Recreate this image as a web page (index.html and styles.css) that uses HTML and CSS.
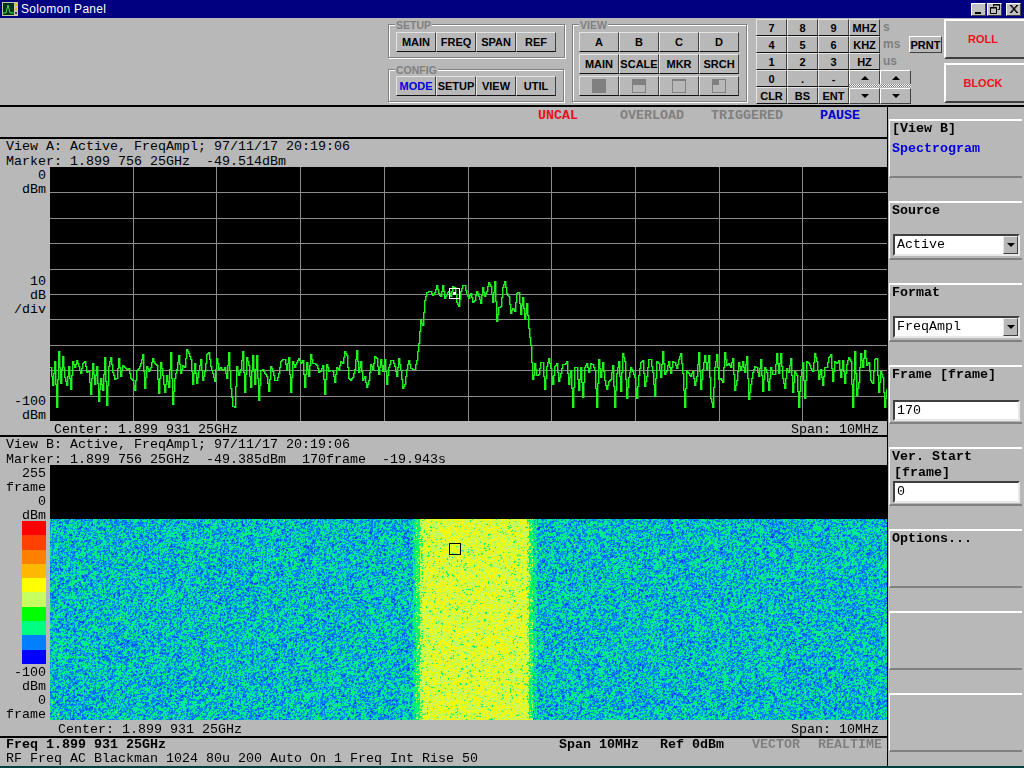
FILE: index.html
```html
<!DOCTYPE html>
<html lang="en">
<head>
<meta charset="utf-8">
<title>Solomon Panel</title>
<link rel="stylesheet" href="styles.css">
</head>
<body>
<div class="window">
  <header class="titlebar">
    <svg class="app-icon" width="16" height="14" viewBox="0 0 16 14"><rect width="16" height="14" fill="#c8c8a0"/><rect x="1" y="1" width="11" height="12" fill="#003020"/><path d="M1 11H4L6 3L8 11H12" fill="none" stroke="#40e040"/><rect x="13" y="2" width="2" height="2" fill="#e0c000"/><rect x="13" y="6" width="2" height="2" fill="#e0c000"/><rect x="13" y="10" width="2" height="2" fill="#404040"/></svg>
    <span class="title-text">Solomon Panel</span>
    <div class="win-buttons">
      <span class="win-btn"><svg width="14" height="12" viewBox="0 0 14 12"><rect x="3" y="9" width="6" height="2" fill="#000"/></svg></span>
      <span class="win-btn gap-after"><svg width="14" height="12" viewBox="0 0 14 12"><path d="M5.5 3.5V1.5H11.5V6.5H9.5M2.5 4.5H8.5V10.5H2.5Z" fill="none" stroke="#000"/><path d="M5 2H12M2 5H9" stroke="#000"/></svg></span>
      <span class="win-btn"><svg width="14" height="12" viewBox="0 0 14 12"><path d="M3 2L10 10M4 2L11 10M10 2L3 10M11 2L4 10" stroke="#000"/></svg></span>
    </div>
  </header>

  <section class="toolbar">
    <div class="group-col">
      <div class="group group-setup">
        <span class="legend">SETUP</span>
        <div class="btn-row"><button class="btn">MAIN</button><button class="btn">FREQ</button><button class="btn">SPAN</button><button class="btn">REF</button></div>
      </div>
      <div class="group group-config">
        <span class="legend">CONFIG</span>
        <div class="btn-row"><button class="btn blue">MODE</button><button class="btn">SETUP</button><button class="btn">VIEW</button><button class="btn">UTIL</button></div>
      </div>
    </div>
    <div class="group group-view">
      <span class="legend">VIEW</span>
      <div class="btn-row"><button class="btn">A</button><button class="btn">B</button><button class="btn">C</button><button class="btn">D</button></div>
      <div class="btn-row"><button class="btn">MAIN</button><button class="btn">SCALE</button><button class="btn">MKR</button><button class="btn">SRCH</button></div>
      <div class="btn-row">
        <button class="btn"><svg width="14" height="14" viewBox="0 0 14 14"><rect width="14" height="14" fill="#808080"/></svg></button>
        <button class="btn"><svg width="14" height="14" viewBox="0 0 14 14"><rect x=".5" y=".5" width="13" height="13" fill="none" stroke="#808080"/><rect width="14" height="6" fill="#808080"/></svg></button>
        <button class="btn"><svg width="14" height="14" viewBox="0 0 14 14"><rect x=".5" y=".5" width="13" height="13" fill="none" stroke="#808080"/><rect width="14" height="2" fill="#808080"/></svg></button>
        <button class="btn"><svg width="14" height="14" viewBox="0 0 14 14"><rect x=".5" y=".5" width="13" height="13" fill="none" stroke="#808080"/><rect width="7" height="6" fill="#808080"/></svg></button>
      </div>
    </div>
    <div class="keypad">
      <button class="key">7</button><button class="key">8</button><button class="key">9</button><button class="key">MHZ</button><span class="unit">s</span><span class="key-spacer"></span>
      <button class="key">4</button><button class="key">5</button><button class="key">6</button><button class="key">KHZ</button><span class="unit">ms</span><button class="key prnt">PRNT</button>
      <button class="key">1</button><button class="key">2</button><button class="key">3</button><button class="key">HZ</button><span class="unit">us</span><span class="key-spacer"></span>
      <button class="key">0</button><button class="key">.</button><button class="key">-</button><button class="key arrow"><i class="tri-up"></i></button><button class="key arrow span2"><i class="tri-up"></i></button><span class="key-end"></span>
      <button class="key">CLR</button><button class="key">BS</button><button class="key">ENT</button><button class="key arrow down"><i class="tri-down"></i></button><button class="key arrow down span2"><i class="tri-down"></i></button><span class="key-end"></span>
      <span class="dither"></span>
    </div>
    <div class="mode-col">
      <button class="mode-btn">ROLL</button>
      <button class="mode-btn">BLOCK</button>
    </div>
  </section>

  <main class="main">
    <div class="left">
      <div class="status-top">
        <span class="st st-uncal">UNCAL</span>
        <span class="st st-over">OVERLOAD</span>
        <span class="st st-trig">TRIGGERED</span>
        <span class="st st-pause">PAUSE</span>
      </div>

      <section class="view view-a">
        <div class="view-head">View A: Active, FreqAmpl; 97/11/17 20:19:06
Marker: 1.899 756 25GHz  -49.514dBm</div>
        <div class="plot-row plot-a">
          <div class="axis">
            <div>0<br>dBm</div>
            <div>10<br>dB<br>/div</div>
            <div>-100<br>dBm</div>
          </div>
          <canvas id="trace" width="837" height="254"></canvas>
        </div>
        <div class="view-foot foot-a"><span>Center: 1.899 931 25GHz</span><span>Span: 10MHz</span></div>
      </section>

      <section class="view view-b">
        <div class="view-head">View B: Active, FreqAmpl; 97/11/17 20:19:06
Marker: 1.899 756 25GHz  -49.385dBm  170frame  -19.943s</div>
        <div class="plot-row plot-b">
          <div class="axis">
            <div>255<br>frame<br>0<br>dBm</div>
            <div class="colorbar">
              <i class="c1"></i><i class="c2"></i><i class="c3"></i><i class="c4"></i><i class="c5"></i><i class="c6"></i><i class="c7"></i><i class="c8"></i><i class="c9"></i><i class="c10"></i>
            </div>
            <div>-100<br>dBm<br>0<br>frame</div>
          </div>
          <div class="spectro">
            <div class="spectro-blank"></div>
            <canvas id="spectro" width="837" height="201"></canvas>
            <span class="spectro-marker"></span>
          </div>
        </div>
        <div class="view-foot foot-b"><span>Center: 1.899 931 25GHz</span><span>Span: 10MHz</span></div>
      </section>

      <footer class="status-bottom">
        <div class="sb-line">
          <b class="sb-freq">Freq 1.899 931 25GHz</b>
          <b class="sb-span">Span 10MHz</b>
          <b class="sb-ref">Ref 0dBm</b>
          <b class="sb-vec">VECTOR</b>
          <b class="sb-rt">REALTIME</b>
        </div>
        <div class="sb-line">RF Freq AC Blackman 1024 80u 200 Auto On 1 Freq Int Rise 50</div>
      </footer>
    </div>

    <aside class="panel">
      <div class="sec"><div class="sec-label">[View B]</div><div class="sec-value">Spectrogram</div></div>
      <div class="sec"><div class="sec-label">Source</div><div class="combo"><span>Active</span><i class="combo-btn"><i class="tri-down"></i></i></div></div>
      <div class="sec"><div class="sec-label">Format</div><div class="combo"><span>FreqAmpl</span><i class="combo-btn"><i class="tri-down"></i></i></div></div>
      <div class="sec"><div class="sec-label">Frame [frame]</div><div class="field field-frame">170</div></div>
      <div class="sec"><div class="sec-label">Ver. Start</div><div class="sec-label sub">[frame]</div><div class="field field-start">0</div></div>
      <div class="sec"><div class="sec-label">Options...</div></div>
      <div class="sec"></div>
      <div class="sec"></div>
    </aside>
  </main>
  <div class="bottom-edge"></div>
</div>
<script src="app.js"></script>
</body>
</html>
```
FILE: styles.css
```css
* { box-sizing: border-box; }
html, body { margin: 0; padding: 0; }
body { background: #b8b8b8; overflow: hidden; }
button { margin: 0; padding: 0; font: inherit; color: inherit; }

.window { width: 1024px; height: 768px; display: flex; flex-direction: column; background: #b8b8b8; color: #000; font-family: "Liberation Mono", monospace; font-size: 13.33px; }

.titlebar { flex: none; height: 18px; background: #000080; display: flex; align-items: center; padding: 0 3px 0 2px; }
.app-icon { flex: none; display: block; }
.title-text { margin-left: 3px; color: #fff; font: 12px "Liberation Sans", sans-serif; letter-spacing: .3px; }
.win-buttons { margin-left: auto; display: flex; }
.win-btn { width: 15px; height: 13px; background: #c0c0c0; margin-left: 1px; border: 1px solid; border-color: #fff #404040 #404040 #fff; display: flex; align-items: center; justify-content: center; overflow: hidden; }
.win-btn svg { flex: none; }
.gap-after { margin-right: 3px; }

.toolbar { flex: none; height: 89px; padding-left: 388px; display: flex; border-bottom: 2px solid #000; }

.group-col { width: 177px; padding-top: 6px; display: flex; flex-direction: column; gap: 11px; }
.group { position: relative; border: 1px solid #808080; box-shadow: 1px 1px 0 #fff, inset 1px 1px 0 #fff; }
.group-setup { height: 34px; padding: 7px 0 0 7px; }
.group-config { height: 33px; padding: 6px 0 0 7px; width: 176px; }
.group-view { width: 175px; height: 78px; margin: 6px 0 0 7px; padding: 7px 0 0 6px; display: flex; flex-direction: column; gap: 2px; }
.legend { position: absolute; left: 6px; top: -6px; padding: 0 1px; background: #b8b8b8; color: #808080; font: bold 10.5px/12px "Liberation Sans", sans-serif; }

.btn-row { display: flex; height: 20px; }
.btn { flex: none; width: 40px; height: 20px; background: #b8b8b8; border: 1px solid; border-color: #e4e4e4 #404040 #101010 #e4e4e4; font: bold 11px "Liberation Sans", sans-serif; display: flex; align-items: center; justify-content: center; white-space: nowrap; overflow: visible; }
.btn svg { display: block; }
.blue { color: #0000e0; }

.keypad { position: relative; flex: none; width: 186px; margin: 1px 0 0 9px; display: grid; grid-template-columns: 31px 31px 31px 31px 29px 2px 31px; grid-auto-rows: 17px; align-content: start; }
.key { background: #b8b8b8; border: 1px solid; border-color: #e4e4e4 #404040 #101010 #e4e4e4; font: bold 11px "Liberation Sans", sans-serif; display: flex; align-items: center; justify-content: center; }
.unit { grid-column: 5; color: #808080; font: bold 12px/17px "Liberation Sans", sans-serif; padding-left: 3px; white-space: nowrap; }
.prnt { grid-column: 6 / 8; border-color: #fff #404040 #404040 #fff; }
.key-spacer { grid-column: 6 / 8; }
.key-end { grid-column: 7; }
.span2 { grid-column: 5 / 7; }
.arrow { height: 16px; border-color: #fff #404040 #404040 #fff; }
.arrow.down { margin-top: 1px; }
.dither { position: absolute; left: 93px; top: 65px; width: 62px; height: 3px; background: repeating-conic-gradient(#fff 0 25%, #808080 0 50%) 0 0 / 2px 2px; }
.tri-up, .tri-down { display: block; width: 0; height: 0; border-left: 4px solid transparent; border-right: 4px solid transparent; }
.tri-up { border-bottom: 4px solid #000; }
.tri-down { border-top: 4px solid #000; }

.mode-col { flex: none; width: 80px; margin-left: 2px; padding-top: 1px; display: flex; flex-direction: column; gap: 4px; }
.mode-btn { height: 40px; width: 80px; padding-right: 4px; background: #b8b8b8; border: 0; border-top: 2px solid #fff; border-left: 2px solid #fff; border-bottom: 2px solid #404040; color: #f01020; font: bold 11px "Liberation Sans", sans-serif; }

.main { flex: 1; min-height: 0; display: flex; }
.left { width: 888px; flex: none; border-right: 1px solid #000; display: flex; flex-direction: column; }
.panel { flex: 1; padding: 12px 2px 0 1px; display: flex; flex-direction: column; gap: 23px; }

.status-top { flex: none; height: 30px; padding-left: 538px; display: flex; font-weight: bold; line-height: 18px; }
.st { flex: none; }
.st-uncal { width: 82px; color: #e81020; }
.st-over { width: 91px; color: #808080; }
.st-trig { width: 109px; color: #808080; }
.st-pause { color: #0000d0; }

.view { flex: none; border-top: 2px solid #000; }
.view-a { height: 298px; }
.view-b { height: 301px; }
.view-head { height: 28px; padding-left: 6px; white-space: pre; line-height: 15px; }
.plot-row { display: flex; }
.plot-a { height: 254px; }
.plot-b { height: 255px; }
.axis { flex: none; width: 50px; height: calc(100% + 2px); padding: 2px 4px 0 0; display: flex; flex-direction: column; justify-content: space-between; text-align: right; line-height: 14px; }
canvas { display: block; }
.colorbar { width: 24px; height: 143px; margin: -2px 0 2px 22px; display: flex; flex-direction: column; }
.colorbar i { display: block; flex: 1; }
.c1 { background: #ff0000; } .c2 { background: #ff4000; } .c3 { background: #ff8000; } .c4 { background: #ffb800; } .c5 { background: #ffff00; }
.c6 { background: #c8ff60; } .c7 { background: #00ff00; } .c8 { background: #00ff80; } .c9 { background: #0080ff; } .c10 { background: #0000ff; }
.spectro { position: relative; flex: none; width: 837px; }
.spectro-blank { height: 54px; background: #000; }
.spectro-marker { position: absolute; left: 399px; top: 78px; width: 12px; height: 12px; border: 1px solid #000; }
.view-foot { display: flex; justify-content: space-between; padding-right: 8px; line-height: 15px; }
.foot-a { padding-left: 54px; padding-top: 1px; }
.foot-b { padding-left: 58px; padding-top: 2px; }

.status-bottom { flex: none; border-top: 2px solid #000; padding: 0 0 0 6px; line-height: 14px; }
.sb-line { display: flex; white-space: pre; height: 14px; }
.sb-freq { width: 553px; }
.sb-span { width: 101px; }
.sb-ref { width: 92px; }
.sb-vec { width: 66px; color: #808080; }
.sb-rt { color: #808080; }

.sec { flex: none; height: 59px; border-top: 2px solid #fff; border-left: 1px solid #fff; border-bottom: 2px solid #808080; padding: 0 0 0 2px; font-weight: bold; line-height: 16px; }
.sec-value { margin-top: 4px; color: #0000e0; }
.sub { padding-left: 2px; }
.combo { margin: 15px 0 0 1px; height: 22px; width: 127px; background: #fff; border: 2px solid; border-color: #404040 #e8e8e8 #e8e8e8 #404040; display: flex; font-weight: normal; line-height: 18px; padding-left: 2px; }
.combo span { flex: 1; }
.combo-btn { flex: none; width: 15px; height: 18px; background: #b8b8b8; border: 1px solid; border-color: #e8e8e8 #404040 #404040 #e8e8e8; display: flex; align-items: center; justify-content: center; }
.field { margin-left: 1px; width: 127px; background: #fff; border: 2px solid; border-color: #404040 #e8e8e8 #e8e8e8 #404040; font-weight: normal; padding-left: 2px; height: 21px; line-height: 17px; }
.field-frame { margin-top: 17px; }
.field-start { height: 22px; line-height: 18px; }

.bottom-edge { flex: none; height: 2px; background: #004040; }
```
FILE: app.js
```js
(function () {
  var state = 0x5eed1234;
  function rnd() { // mulberry32
    state = (state + 0x6D2B79F5) | 0;
    var r = Math.imul(state ^ (state >>> 15), 1 | state);
    r = (r + Math.imul(r ^ (r >>> 7), 61 | r)) ^ r;
    return ((r ^ (r >>> 14)) >>> 0) / 4294967296;
  }
  function gauss() { return (rnd() + rnd() + rnd() + rnd() - 2) * 1.73; }

  // Trace plot
  var tc = document.getElementById('trace');
  var t = tc.getContext('2d');
  t.fillStyle = '#000';
  t.fillRect(0, 0, 837, 254);
  t.fillStyle = '#8c8c8c';
  var i;
  for (i = 1; i < 10; i++) t.fillRect(Math.round(i * 83.7) - 1, 0, 1, 254);
  for (i = 1; i < 10; i++) t.fillRect(0, Math.round(i * 25.4), 837, 1);

  function env(x) { // page x to page y of the level
    if (x < 414) return 366;
    if (x < 420) return 366 - (x - 414) * 7;
    if (x < 428) return 324 - (x - 420) * 4;
    if (x < 522) return 291;
    if (x < 533) return 291 + (x - 522) * 6.8;
    return 366;
  }
  function sample() { // log-Rayleigh fluctuation in px, long tail downwards
    var e = Math.max(-Math.log(Math.max(rnd(), 0.001)), 0.025);
    return -10 * Math.log(e) / Math.LN10 * 2.54;
  }
  // A sample every 2 px, joined by straight segments
  var STEP = 2, pts = [];
  for (var n = 0; n <= 837 / STEP + 1; n++) pts.push(sample());
  function level(x) {
    var k = Math.floor(x / STEP), f = x / STEP - k;
    var p = pts[k] * (1 - f) + pts[k + 1] * f;
    var inBand = x + 50 > 420 && x + 50 < 526;
    return env(x + 50) + p * (inBand ? 0.8 : 1) - 167;
  }
  var prev = Math.round(level(0));
  for (var x = 0; x < 837; x++) {
    var y = Math.min(253, Math.max(0, Math.round(level(x))));
    var a = Math.min(prev, y), b = Math.max(prev, y);
    t.fillStyle = 'rgba(34,220,34,.5)';
    t.fillRect(x + 1, a, 1, b - a + 1);
    t.fillStyle = '#22f022';
    t.fillRect(x, a, 1, b - a + 1);
    prev = y;
  }
  // Marker on the trace
  t.strokeStyle = '#fff';
  t.lineWidth = 1;
  t.strokeRect(399.5, 121.5, 10, 10);
  t.fillStyle = '#fff';
  t.fillRect(403, 125, 3, 3);

  // Spectrogram
  var sc = document.getElementById('spectro');
  var g = sc.getContext('2d');
  var W = 837, H = 201;
  var img = g.createImageData(W, H);
  var pal = [[0, 60, 240], [0, 130, 245], [0, 235, 150], [0, 245, 90], [195, 250, 90], [250, 250, 0]];
  var field = new Float32Array(W * H);
  for (i = 0; i < W * H; i++) field[i] = gauss();
  function mean(px) {
    if (px < 413) return 1.52;
    if (px < 416) return 2.3;
    if (px < 420) return 3.0;
    if (px < 423) return 3.9;
    if (px < 527) return 4.4;
    if (px < 529) return 3.9;
    if (px < 533) return 3.0;
    if (px < 537) return 2.1;
    return 1.52;
  }
  var rgb = new Float32Array(W * H * 3);
  var yy, xx, o, k;
  for (yy = 0; yy < H; yy++) {
    for (xx = 0; xx < W; xx++) {
      var nb = field[yy * W + xx];
      if (xx > 0) nb += 0.5 * field[yy * W + xx - 1];
      if (yy > 0) nb += 0.5 * field[(yy - 1) * W + xx];
      var m = mean(xx + 50);
      var sig = m > 3.5 ? 0.42 : 0.52;
      var v = Math.max(0, Math.min(5, Math.round(m + nb * sig)));
      for (k = 0; k < 3; k++) rgb[(yy * W + xx) * 3 + k] = pal[v][k];
    }
  }
  // Mild softening of neighbouring cells
  for (yy = 0; yy < H; yy++) {
    for (xx = 0; xx < W; xx++) {
      o = (yy * W + xx);
      var l = xx > 0 ? o - 1 : o, r = xx < W - 1 ? o + 1 : o, u = yy > 0 ? o - W : o, d = yy < H - 1 ? o + W : o;
      for (k = 0; k < 3; k++) {
        img.data[o * 4 + k] = 0.8 * rgb[o * 3 + k] + 0.05 * (rgb[l * 3 + k] + rgb[r * 3 + k] + rgb[u * 3 + k] + rgb[d * 3 + k]);
      }
      img.data[o * 4 + 3] = 255;
    }
  }
  g.putImageData(img, 0, 0);
})();
```
